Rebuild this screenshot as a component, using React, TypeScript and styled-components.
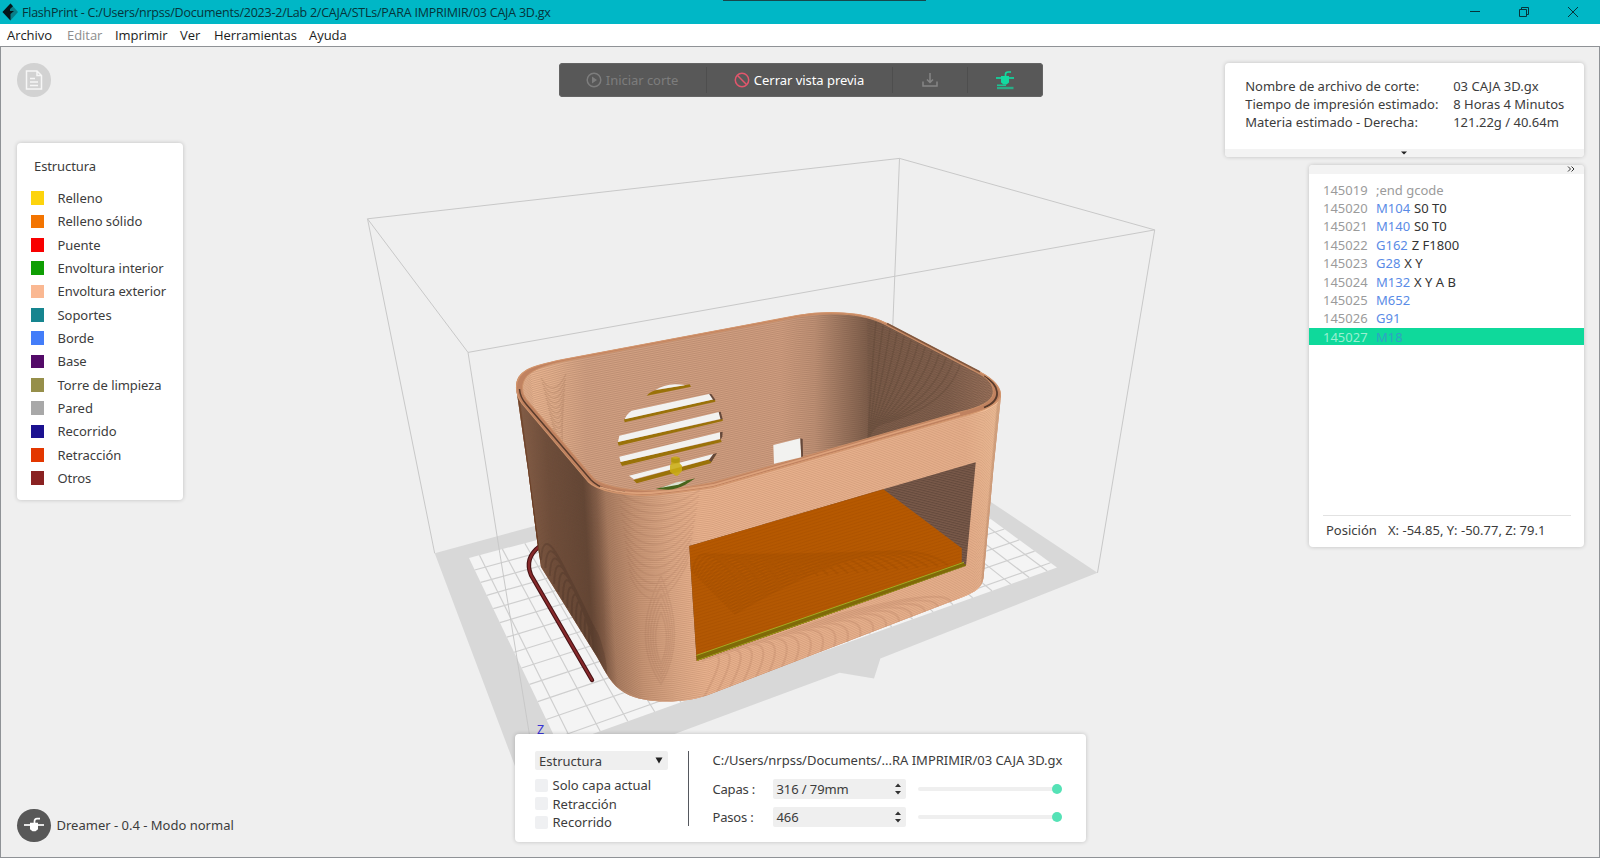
import React from "react";
import styled, { createGlobalStyle } from "styled-components";

const GlobalStyle = createGlobalStyle`
  * { box-sizing: border-box; }
  html, body, #root { margin: 0; height: 100%; }
  body { overflow: hidden; background: #efefef; }
`;

const Window = styled.div`
  display: flex;
  flex-direction: column;
  width: 1600px;
  height: 858px;
  font-family: "Noto Sans", "Open Sans", sans-serif;
  font-size: 13px;
  color: #3c3c3c;
  white-space: nowrap;
`;

const TitleBar = styled.header`
  display: flex;
  align-items: center;
  height: 24px;
  flex: none;
  padding: 0 21px 0 2px;
  background: #00b7c6;
  color: #06343a;
`;
const TitleText = styled.span`
  margin-left: 3px;
  flex: 1;
  font-family: "Open Sans", sans-serif;
  font-size: 12.5px;
  letter-spacing: -0.23px;
`;
const WindowEdge = styled.i`
  position: absolute;
  left: 723px;
  top: 0;
  width: 203px;
  height: 1px;
  background: #17474c;
`;
const WindowButtons = styled.div`
  display: flex;
  gap: 37px;
  align-items: center;
`;

const MenuBar = styled.nav`
  display: flex;
  align-items: center;
  gap: 14px;
  height: 22px;
  flex: none;
  padding-left: 7px;
  background: #fff;
  font-family: "Open Sans", sans-serif;
  color: #1c1c1c;
`;
const MenuItem = styled.span<{ $w: number; $disabled?: boolean }>`
  width: ${(p) => p.$w}px;
  font-size: 13px;
  letter-spacing: -0.05px;
  color: ${(p) => (p.$disabled ? "#8d8d8d" : "inherit")};
`;

const Viewport = styled.main`
  position: relative;
  flex: 1;
  border: 1px solid #8f9296;
  background: #efefef;
`;
const Scene = styled.svg`
  position: absolute;
  left: -1px;
  top: -1px;
  width: 1600px;
  height: 812px;
`;
const Overlay = styled.div`
  position: relative;
  display: grid;
  grid-template-columns: 360px 1fr 360px;
  height: 100%;
  padding: 16px 15px 15px 16px;
`;
const Column = styled.section<{ $align: string }>`
  display: flex;
  flex-direction: column;
  align-items: ${(p) => p.$align};
`;
const Spacer = styled.div`
  flex: 1;
`;
const Panel = styled.div`
  background: #fff;
  border-radius: 4px;
  box-shadow: 0 0 4px rgba(0, 0, 0, 0.2);
`;

const RoundButton = styled.div<{ $bg: string }>`
  display: grid;
  place-items: center;
  width: 33.5px;
  height: 33.5px;
  border-radius: 50%;
  background: ${(p) => p.$bg};
`;

const Legend = styled(Panel)`
  width: 165.5px;
  height: 357px;
  margin-top: 46px;
  padding: 13px 0 0 13.5px;
`;
const LegendTitle = styled.div`
  height: 20px;
  line-height: 20px;
  margin: 0 0 11px 3.5px;
  letter-spacing: -0.1px;
`;
const LegendRow = styled.div`
  display: flex;
  align-items: center;
  height: 23.34px;
  letter-spacing: -0.05px;
`;
const Swatch = styled.i<{ $c: string }>`
  width: 13px;
  height: 13.5px;
  margin-right: 14px;
  background: ${(p) => p.$c};
`;

const Machine = styled.div`
  display: flex;
  align-items: center;
  gap: 6px;
`;

const Toolbar = styled.div`
  display: flex;
  align-items: center;
  width: 484px;
  height: 34px;
  border-radius: 4px;
  background: #585858;
  box-shadow: inset 0 0 0 1px #646464;
`;
const Tool = styled.div<{ $w: number; $c: string; $last?: boolean }>`
  display: flex;
  align-items: center;
  justify-content: center;
  gap: 4px;
  width: ${(p) => p.$w}px;
  height: 26px;
  color: ${(p) => p.$c};
  letter-spacing: -0.04px;
  border-right: ${(p) => (p.$last ? "none" : "1px solid #4e4e4e")};
`;

const InfoPanel = styled(Panel)`
  display: flex;
  flex-direction: column;
  width: 359px;
  height: 94px;
  overflow: hidden;
`;
const InfoGrid = styled.div`
  display: grid;
  grid-template-columns: 208px 1fr;
  grid-auto-rows: 18.3px;
  line-height: 18.3px;
  padding: 13.8px 0 0 20.2px;
  flex: 1;
`;
const Strip = styled.div<{ $justify: string }>`
  display: flex;
  align-items: center;
  justify-content: ${(p) => p.$justify};
  height: 8.5px;
  padding-right: ${(p) => (p.$justify === "flex-end" ? 9 : 1)}px;
  background: #f3f3f3;
`;

const CodePanel = styled(Panel)`
  display: flex;
  flex-direction: column;
  width: 275px;
  height: 382px;
  margin-top: 8px;
  overflow: hidden;
`;
const CodeList = styled.div`
  flex: 1;
  padding-top: 7.3px;
`;
const CodeRow = styled.div<{ $active?: boolean }>`
  display: flex;
  height: 18.35px;
  line-height: 18.35px;
  padding-left: 14px;
  background: ${(p) => (p.$active ? "linear-gradient(#0fd99b, #0fd99b) 0 0 / 100% 17.3px no-repeat" : "none")};
  color: ${(p) => (p.$active ? "#9af0d2" : "#9b9b9b")};
`;
const LineNo = styled.span`
  width: 53px;
`;
const Command = styled.span<{ $active?: boolean }>`
  margin-right: 4px;
  color: ${(p) => (p.$active ? "#2fa2c4" : "#5a8be6")};
`;
const Args = styled.span`
  color: #333;
`;
const Position = styled.div`
  display: flex;
  height: 32px;
  line-height: 29px;
  margin: 0 13px 0 14px;
  padding-left: 3px;
  border-top: 1px solid #e2e2e2;
`;
const PositionLabel = styled.span`
  width: 62px;
`;

const Controls = styled(Panel)`
  display: flex;
  width: 571px;
  height: 108px;
  padding: 17px 0 0 20px;
`;
const DisplayOptions = styled.div`
  width: 153px;
`;
const Select = styled.div`
  display: flex;
  align-items: center;
  justify-content: space-between;
  width: 133px;
  height: 19px;
  margin-bottom: 6px;
  padding: 0 5px 0 4px;
  border-radius: 2px;
  background: #efefef;
`;
const Check = styled.div`
  display: flex;
  align-items: center;
  height: 18.5px;
  gap: 4.5px;
  &::before {
    content: "";
    width: 13px;
    height: 13px;
    border-radius: 2px;
    background: #eff0f2;
  }
`;
const Divider = styled.i`
  width: 1px;
  height: 75px;
  margin-right: 23.5px;
  background: #55585e;
`;
const Playback = styled.div`
  display: flex;
  flex-direction: column;
`;
const FileName = styled.div`
  height: 19px;
  line-height: 19px;
  margin-bottom: 5px;
  letter-spacing: -0.02px;
`;
const PlaybackRow = styled.div`
  display: flex;
  align-items: center;
  height: 28.3px;
`;
const RowLabel = styled.span`
  width: 60px;
  letter-spacing: -0.2px;
`;
const Spin = styled.div`
  display: flex;
  align-items: center;
  justify-content: space-between;
  width: 133px;
  height: 20px;
  margin-right: 12.5px;
  padding: 0 4px;
  border-radius: 2px;
  letter-spacing: -0.1px;
  background: #efefef;
`;
const Track = styled.div`
  display: flex;
  align-items: center;
  justify-content: flex-end;
  width: 144px;
  height: 4px;
  border-radius: 2px;
  background: linear-gradient(90deg, #efefef 136px, transparent 136px);
`;
const Knob = styled.i`
  width: 10px;
  height: 10px;
  border-radius: 50%;
  background: #55e2b6;
`;

const LEGEND: [string, string][] = [
  ["Relleno", "#fdd40d"],
  ["Relleno sólido", "#f37400"],
  ["Puente", "#f80000"],
  ["Envoltura interior", "#0f9e04"],
  ["Envoltura exterior", "#fab892"],
  ["Soportes", "#16858f"],
  ["Borde", "#437df9"],
  ["Base", "#530a68"],
  ["Torre de limpieza", "#968f4a"],
  ["Pared", "#a8a8a8"],
  ["Recorrido", "#1b1190"],
  ["Retracción", "#e33700"],
  ["Otros", "#8a2222"],
];

const GCODE: [string, string, string][] = [
  ["145019", "", ";end gcode"],
  ["145020", "M104", "S0 T0"],
  ["145021", "M140", "S0 T0"],
  ["145022", "G162", "Z F1800"],
  ["145023", "G28", "X Y"],
  ["145024", "M132", "X Y A B"],
  ["145025", "M652", ""],
  ["145026", "G91", ""],
  ["145027", "M18", ""],
];

type P = [number, number];

/* Projective map from the unit square onto the build plate. */
const PLATE: P[] = [[469, 558], [891, 446], [1057, 567.5], [559, 746]];
function project(u: number, v: number): P {
  const [[x0, y0], [x1, y1], [x2, y2], [x3, y3]] = PLATE;
  const dx1 = x1 - x2, dx2 = x3 - x2, sx = x0 - x1 + x2 - x3;
  const dy1 = y1 - y2, dy2 = y3 - y2, sy = y0 - y1 + y2 - y3;
  const d = dx1 * dy2 - dx2 * dy1;
  const g = (sx * dy2 - dx2 * sy) / d;
  const h = (dx1 * sy - sx * dy1) / d;
  const w = g * u + h * v + 1;
  return [
    ((x1 - x0 + g * x1) * u + (x3 - x0 + h * x3) * v + x0) / w,
    ((y1 - y0 + g * y1) * u + (y3 - y0 + h * y3) * v + y0) / w,
  ];
}
const seg = (a: P, b: P) => `M${a[0].toFixed(1)} ${a[1].toFixed(1)}L${b[0].toFixed(1)} ${b[1].toFixed(1)}`;
const gridPath = [
  ...Array.from({ length: 22 }, (_, i) => seg(project((i + 0.45) / 22, 0), project((i + 0.45) / 22, 1))),
  ...Array.from({ length: 12 }, (_, i) => seg(project(0, (i + 1) / 12.4), project(1, (i + 1) / 12.4))),
].join("");

/* Printed layers: the rim outline swept down to the footprint outline. */
const RIM: P[] = [[516, 387], [520, 401], [590, 483], [600, 489], [613, 493], [634, 496], [660, 494], [713, 487], [960, 417], [985, 411], [997, 404], [1001, 395]];
const FOOT: P[] = [[537, 540], [541, 567], [597, 657], [606, 673], [617, 687], [640, 699], [673, 702], [708, 696], [955, 600], [973, 592], [981, 585], [984, 578]];
const sweep = (a: P[], b: P[], n: number) =>
  Array.from({ length: n }, (_, k) => {
    const t = (k + 0.5) / n;
    return "M" + a.map((p, i) => `${(p[0] + (b[i][0] - p[0]) * t).toFixed(2)} ${(p[1] + (b[i][1] - p[1]) * t).toFixed(2)}`).join("L");
  }).join("");
const layers = sweep(RIM, FOOT, 108);
const BACK: P[] = [[519, 386], [530, 368], [563, 359], [797, 315], [830, 312], [867, 316], [887, 323], [980, 372], [996, 385]];
const BACKFOOT: P[] = [[538, 546], [545, 530], [575, 520], [790, 470], [830, 466], [860, 470], [880, 477], [960, 548], [975, 560]];
const innerLayers = sweep(BACK, BACKFOOT, 78);

/* Interference ripples where the layer lines run close together. */
const repeat = (n: number, f: (i: number) => string) => Array.from({ length: n }, (_, i) => f(i)).join("");
const cornerRipples =
  repeat(5, (i) => `M661 ${612 - i * 9}Q${650 - i * 5} 638 661 ${664 + i * 5}Q${672 + i * 4} 638 661 ${612 - i * 9}`) +
  repeat(13, (i) => `M${618 + i} ${492 + i * 7}Q656 ${520 + i * 9} ${700 - i} ${490 + i * 6}`);
const wallRipples = repeat(13, (i) => `M${541 + i * 4.4} ${560 + i * 8}Q${543 + i * 4} ${528 + i * 7} ${560 + i * 3.4} ${560 + i * 7}T${590 + i} ${620 + i * 6}`);
const baseRipples = repeat(20, (i) => `M${704 + i * 13} ${697 - i * 5}Q${735 + i * 11} ${640 - i * 2.8} ${702 + i * 7} ${661 - i * 2.4}`);
const floorRipples = repeat(22, (i) => `M${692 + i * 2} ${572 + i * 2}Q${700 + i * 9} ${532 - i * 0.5} ${738 + i * 10} ${582 - i * 0.8}`);
const insideRipples = repeat(13, (i) => `M${876 + i * 7} ${322 + i * 3.6}Q${872 + i * 6} ${362 + i * 4} ${868 + i * 0.5} ${440 - i * 1.2}`);
const leftRipples = repeat(12, (i) => `M${541 + i * 1.2} ${378 + i * 5}Q${554 + i} ${400 + i * 5} ${566 - i * 0.4} ${374 + i * 5}`);

const OUTER = "M516 387C516 371 530 366 563 359.3L797 315.3C825 310 864 311 887 323.3L980 371.7C996 380 1001 388 1001 396L993.3 470L990 507L983.5 578C982 588 975 592 963 597L708 695C690 702 648 706 625 693C611 685 606 673 597 657L541 567L537 540L528 470Z";
const FACE = "M516 387Q516 397 522 403L588 481C596 490 625 498 660 494Q690 491 713 487L960 416.7Q1001 407 1001 395L993.3 470L990 507L983.5 578C982 588 975 592 963 597L708 695C690 702 648 706 625 693C611 685 606 673 597 657L541 567L537 540L528 470Z";
const INNER = "M522.5 388C523 373 537 367 565 361L798 317C825 312 862 312 885 324.5L978 373C991 380 994 387 993 394Q991 405 960 412L713 482.5Q680 489 655 490.5C630 491 605 487 594 478.5L527 400Q522 394 522.5 388Z";

function PrintScene() {
  return (
    <Scene viewBox="0 46 1600 812">
      <defs>
        <linearGradient id="face" gradientUnits="userSpaceOnUse" x1="516" y1="500" x2="1001" y2="470">
          <stop offset="0" stopColor="#8f6952" />
          <stop offset="0.07" stopColor="#70513f" />
          <stop offset="0.14" stopColor="#634838" />
          <stop offset="0.165" stopColor="#84604b" />
          <stop offset="0.185" stopColor="#aa7e63" />
          <stop offset="0.24" stopColor="#c99777" />
          <stop offset="0.31" stopColor="#deaa88" />
          <stop offset="0.37" stopColor="#ebb490" />
          <stop offset="0.93" stopColor="#ebb490" />
          <stop offset="1" stopColor="#f2c19b" />
        </linearGradient>
        <linearGradient id="inside" gradientUnits="userSpaceOnUse" x1="520" y1="0" x2="995" y2="0">
          <stop offset="0" stopColor="#ecb793" />
          <stop offset="0.07" stopColor="#e2af8c" />
          <stop offset="0.14" stopColor="#d2a183" />
          <stop offset="0.55" stopColor="#d09e80" />
          <stop offset="0.62" stopColor="#c09276" />
          <stop offset="0.68" stopColor="#9c765f" />
          <stop offset="0.735" stopColor="#7d5e4b" />
          <stop offset="0.9" stopColor="#83624f" />
          <stop offset="1" stopColor="#9b735c" />
        </linearGradient>
        <linearGradient id="floor" x1="0" y1="0" x2="0" y2="1">
          <stop offset="0" stopColor="#be5c00" />
          <stop offset="1" stopColor="#b95b04" />
        </linearGradient>
        <pattern id="weave" width="3" height="3" patternUnits="userSpaceOnUse" patternTransform="rotate(-17)">
          <path d="M0 .5H3M0 2H3" stroke="#7b3900" strokeWidth=".5" opacity=".45" />
        </pattern>
        <pattern id="shade" width="3" height="2.4" patternUnits="userSpaceOnUse" patternTransform="rotate(14)">
          <path d="M0 .6H3" stroke="#3e2b22" strokeWidth=".8" opacity=".55" />
        </pattern>
        <clipPath id="faceClip"><path d={FACE} /></clipPath>
        <clipPath id="innerClip"><path d={INNER} /></clipPath>
        <clipPath id="windowClip"><path d="M689.3 546L975.7 462.3L966 565.7L696.7 661Z" /></clipPath>
      </defs>

      {/* build plate */}
      <path d="M434.7 553.3L884 431L1097.5 572.8L880.4 658.6L874 678.4L839.7 672.7L524 790Z" fill="#d8d8d8" />
      <path d={`M${PLATE.map((p) => p.join(" ")).join("L")}Z`} fill="#f4f4f4" />
      <path d={gridPath} stroke="#cfcfcf" strokeWidth="1.2" fill="none" />

      {/* build volume */}
      <path
        d="M367.5 218.8L899.5 158.4L1154.7 229.9L468 352.4ZM367.5 218.8L434.7 553.3M1154.7 229.9L1097.5 572.8M899.5 158.4L892.6 330M468 352.4L499.8 553.3L530 738"
        stroke="#c8c8c8" strokeWidth="1" fill="none"
      />

      {/* purge line */}
      <path d="M540 546Q524 558 531 575L592 680" stroke="#481214" strokeWidth="4.4" fill="none" strokeLinecap="round" />
      <path d="M540 546Q524 558 531 575L592 680" stroke="#87292b" strokeWidth="2.2" fill="none" strokeLinecap="round" />

      {/* printed case */}
      <path d={OUTER} fill="#c08260" />
      <path d={FACE} fill="url(#face)" />
      <g clipPath="url(#faceClip)" fill="none">
        <path d={layers} stroke="#6a4028" strokeWidth=".8" opacity=".2" />
        <path d={cornerRipples} stroke="#7d4f36" strokeWidth="1.6" opacity=".1" />
        <path d={wallRipples} stroke="#2c1c14" strokeWidth="2" opacity=".18" />
        <path d={baseRipples} stroke="#8a5638" strokeWidth="2.2" opacity=".12" />
      </g>
      <path d={INNER} fill="url(#inside)" />
      <g clipPath="url(#innerClip)" fill="none">
        <path d={innerLayers} stroke="#523424" strokeWidth=".8" opacity=".2" />
        <path d="M867 300L1000 375V420L868 450Z" fill="url(#shade)" opacity=".4" />
        <path d={insideRipples} stroke="#3c281d" strokeWidth="1.6" opacity=".14" />
        <path d={leftRipples} stroke="#6b432d" strokeWidth="1.4" opacity=".12" />
      </g>
      <path d="M519.5 389Q520 397 526 404L591 480C600 489 612 491 625 492" stroke="#593c2c" strokeWidth="1.5" fill="none" />
      <path d="M984 407.5Q998 402 997 392Q996 383 984 376" stroke="#593c2c" strokeWidth="1.8" fill="none" />
      <path d="M516.5 388Q517 397 522 403.5L588 481.5C596 490 625 498 660 494.5Q690 491 713 487.5L960 417Q1001 407 1000.5 394Q1000 383 980 372L887 323.5C864 311 825 310.5 797 315.5L563 359.5C530 366 516 371 516.5 388" stroke="#d3966d" strokeWidth="1.1" fill="none" />
      <path d={INNER} stroke="#cd9169" strokeWidth=".9" fill="none" />
      <path d="M600 487C620 494 645 494 660 492Q690 489 713 485L960 414" stroke="#dda27b" strokeWidth="1.8" fill="none" />
      <path d="M887 323.5L980 372" stroke="#80573e" strokeWidth="1.6" fill="none" />

      {/* ventilation slots */}
      <g transform="translate(500 290) scale(.33333)">
        <g fill="#9a7209">
          <path d="M440 317Q452 302 475 299L569 283L573 290L500 305Z" />
          <path d="M372 388L645 327L646 335L374 397Z" />
          <path d="M353 456L668 386L668 393L356 467Z" />
          <path d="M360 516L662 448L665 456L366 528Z" />
          <path d="M400 570L630 508L650 490L632 520L410 580Z" />
        </g>
        <g fill="#f2f2f0">
          <path d="M466 300Q490 285 525 283Q545 283 555 286Z" />
          <path d="M374 388Q380 372 395 362L630 311L642 328Z" />
          <path d="M354 456L358 437L657 366L664 386Z" />
          <path d="M362 516L358 500L660 427L660 447Z" />
          <path d="M402 568L387 557L640 492L628 508Z" />
          <path d="M820 465L901 445L904 502L822 521Z" />
        </g>
        <g fill="#65483a">
          <path d="M627 311L634 312L646 329L640 331Z" />
          <path d="M656 366L662 365L668 387L662 389Z" />
          <path d="M660 427L668 425L667 440L661 450Z" />
          <path d="M640 492L651 489L634 516L627 511Z" />
          <path d="M901 445L908 447L909 499L904 502Z" />
        </g>
        <path d="M467 597L530 579L586 565L556 584Q530 597 505 599Z" fill="#47641a" />
        <path d="M480 594L530 577L560 572L535 584Z" fill="#dce3d3" />
        {/* nozzle */}
        <path d="M514 503Q526 496 539 503V520L546 527V543L533 557H527L510 545V527L514 520Z" fill="#c9ac12" opacity=".88" />
        <path d="M514 503Q526 510 539 503V516Q526 522 514 516Z" fill="#ae940c" opacity=".8" />
      </g>

      {/* front window */}
      <g clipPath="url(#windowClip)">
        <path d="M680 450H990V670H680Z" fill="#7a5a4a" />
        <path d="M680 450H990V670H680Z" fill="url(#shade)" />
        <path d="M680 530L883 489L961.7 548.3V566L690 668Z" fill="url(#floor)" />
        <path d="M680 530L883 489L961.7 548.3V566L690 668Z" fill="url(#weave)" />
        <path d={floorRipples} stroke="#6e3200" strokeWidth="2" opacity=".1" fill="none" />
        <path d="M696 655.5L962 562.5L968 566L697 662Z" fill="#7f6a08" />
        <path d="M696 655.5L964 562.3M697 660.6L966 566" stroke="#a5ab22" strokeWidth="1" fill="none" />
      </g>

      <text x="537" y="734" fontSize="12.5" fontFamily="Noto Sans, sans-serif" fill="#3a34d4">Z</text>
    </Scene>
  );
}

const Extruder = ({ color, plate }: { color: string; plate?: boolean }) => (
  <svg width="20" height="20" viewBox="0 0 20 20">
    <path d={plate ? "M1 8H19" : "M0 10H20"} stroke={color} strokeWidth="1.7" />
    <g transform={plate ? undefined : "translate(0 1.7)"}>
      <path d="M6 6H14V12.5L11.5 14.5H8.5L6 12.5Z" fill={color} />
      <path d="M10.5 7V4.5Q10.5 2 13 2H16" stroke={color} strokeWidth="1.7" fill="none" />
    </g>
    {plate && <path d="M2 15.2H11" stroke={color} strokeWidth="1.3" />}
    {plate && <path d="M2 18H18.5" stroke={color} strokeWidth="2.4" opacity=".65" />}
  </svg>
);

const SpinArrows = () => (
  <svg width="8" height="14" viewBox="0 0 8 14">
    <path d="M1 5L4 1.5L7 5ZM1 9L4 12.5L7 9Z" fill="#333" />
  </svg>
);

export default function App() {
  return (
    <Window>
      <GlobalStyle />
      <TitleBar>
        <svg width="17" height="18" viewBox="0 0 17 18">
          <path d="M8.5 .5L16 9L8.5 17.5L.5 9Z" fill="#087e88" />
          <path d="M8.5 .5L.5 9L8.5 17.5V11L12 8H8V6L11 3.2Z" fill="#04161a" />
        </svg>
        <TitleText>FlashPrint - C:/Users/nrpss/Documents/2023-2/Lab 2/CAJA/STLs/PARA IMPRIMIR/03 CAJA 3D.gx</TitleText>
        <WindowEdge />
        <WindowButtons>
          <svg width="12" height="12" viewBox="0 0 12 12"><path d="M1 5.5H11" stroke="#06343a" /></svg>
          <svg width="12" height="12" viewBox="0 0 12 12"><path d="M1.5 3.5H8.5V10.5H1.5ZM3.5 3V1.5H10.5V8.5H9" stroke="#06343a" fill="none" /></svg>
          <svg width="12" height="12" viewBox="0 0 12 12"><path d="M1 1L11 11M11 1L1 11" stroke="#06343a" fill="none" /></svg>
        </WindowButtons>
      </TitleBar>
      <MenuBar>
        <MenuItem $w={46}>Archivo</MenuItem>
        <MenuItem $w={34} $disabled>Editar</MenuItem>
        <MenuItem $w={51}>Imprimir</MenuItem>
        <MenuItem $w={20}>Ver</MenuItem>
        <MenuItem $w={81}>Herramientas</MenuItem>
        <MenuItem $w={38}>Ayuda</MenuItem>
      </MenuBar>
      <Viewport>
        <PrintScene />
        <Overlay>
          <Column $align="flex-start">
            <RoundButton $bg="#d2d2d2">
              <svg width="18" height="20" viewBox="0 0 18 20">
                <path d="M1.5 1H12L16.5 5.5V19H1.5ZM12 1V5.5H16.5M5 8.5H10M5 12H13M5 15.5H13" stroke="#f6f6f6" strokeWidth="1.5" fill="none" />
              </svg>
            </RoundButton>
            <Legend>
              <LegendTitle>Estructura</LegendTitle>
              {LEGEND.map(([name, c]) => (
                <LegendRow key={name}><Swatch $c={c} />{name}</LegendRow>
              ))}
            </Legend>
            <Spacer />
            <Machine>
              <RoundButton $bg="#585858"><Extruder color="#fff" /></RoundButton>
              Dreamer - 0.4 - Modo normal
            </Machine>
          </Column>

          <Column $align="center">
            <Toolbar>
              <Tool $w={148} $c="#7d7d7d">
                <svg width="16" height="16" viewBox="0 0 16 16"><circle cx="8" cy="8" r="6.8" stroke="#7d7d7d" strokeWidth="1.5" fill="none" /><path d="M6 4.5L11 8L6 11.5Z" fill="#7d7d7d" /></svg>
                Iniciar corte
              </Tool>
              <Tool $w={186} $c="#fff">
                <svg width="16" height="16" viewBox="0 0 16 16"><circle cx="8" cy="8" r="6.7" stroke="#e2566c" strokeWidth="1.5" fill="none" /><path d="M3.3 3.3L12.7 12.7" stroke="#e2566c" strokeWidth="1.5" /></svg>
                Cerrar vista previa
              </Tool>
              <Tool $w={75} $c="#858585">
                <svg width="16" height="16" viewBox="0 0 16 16"><path d="M1 9.5V14H15V9.5M8 1V10M5 7.5L8 10.5L11 7.5" stroke="#858585" strokeWidth="1.5" fill="none" /></svg>
              </Tool>
              <Tool $w={75} $c="#14d9a0" $last><Extruder color="#14d9a0" plate /></Tool>
            </Toolbar>
            <Spacer />
            <Controls>
              <DisplayOptions>
                <Select>
                  Estructura
                  <svg width="8" height="7" viewBox="0 0 8 7"><path d="M.5 .5H7.5L4 6.5Z" fill="#222" /></svg>
                </Select>
                <Check>Solo capa actual</Check>
                <Check>Retracción</Check>
                <Check>Recorrido</Check>
              </DisplayOptions>
              <Divider />
              <Playback>
                <FileName>C:/Users/nrpss/Documents/...RA IMPRIMIR/03 CAJA 3D.gx</FileName>
                <PlaybackRow>
                  <RowLabel>Capas :</RowLabel>
                  <Spin>316 / 79mm<SpinArrows /></Spin>
                  <Track><Knob /></Track>
                </PlaybackRow>
                <PlaybackRow>
                  <RowLabel>Pasos :</RowLabel>
                  <Spin>466<SpinArrows /></Spin>
                  <Track><Knob /></Track>
                </PlaybackRow>
              </Playback>
            </Controls>
          </Column>

          <Column $align="flex-end">
            <InfoPanel>
              <InfoGrid>
                <span>Nombre de archivo de corte:</span><span>03 CAJA 3D.gx</span>
                <span>Tiempo de impresión estimado:</span><span>8 Horas 4 Minutos</span>
                <span>Materia estimado - Derecha:</span><span>121.22g / 40.64m</span>
              </InfoGrid>
              <Strip $justify="center">
                <svg width="8" height="4" viewBox="0 0 8 4"><path d="M1 .5H7L4 3.5Z" fill="#222" /></svg>
              </Strip>
            </InfoPanel>
            <CodePanel>
              <Strip $justify="flex-end">
                <svg width="8" height="6" viewBox="0 0 8 6"><path d="M1 .5L3.5 3L1 5.5M4.5 .5L7 3L4.5 5.5" stroke="#333" fill="none" /></svg>
              </Strip>
              <CodeList>
                {GCODE.map(([n, cmd, args]) => (
                  <CodeRow key={n} $active={n === "145027"}>
                    <LineNo>{n}</LineNo>
                    {cmd && <Command $active={n === "145027"}>{cmd}</Command>}
                    {cmd ? <Args>{args}</Args> : <span>{args}</span>}
                  </CodeRow>
                ))}
              </CodeList>
              <Position>
                <PositionLabel>Posición</PositionLabel>
                <span>X: -54.85, Y: -50.77, Z: 79.1</span>
              </Position>
            </CodePanel>
          </Column>
        </Overlay>
      </Viewport>
    </Window>
  );
}
